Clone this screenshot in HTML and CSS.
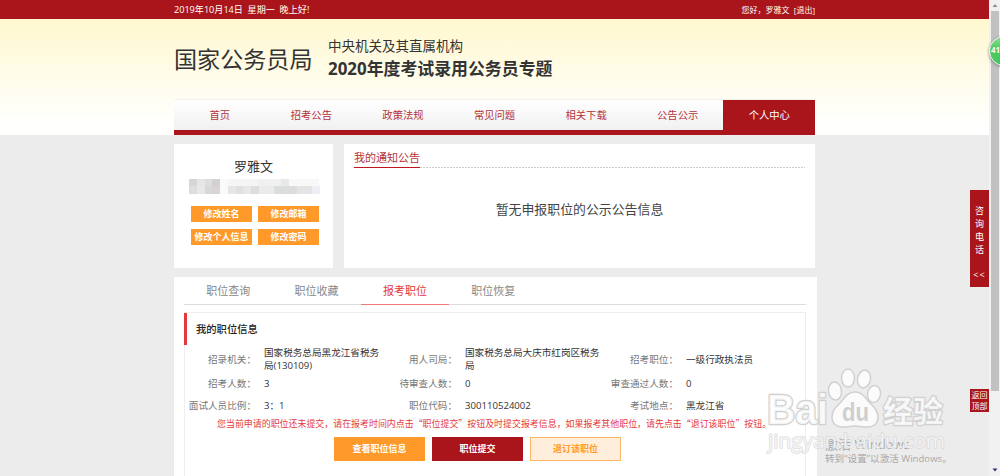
FILE: index.html
```html
<!DOCTYPE html>
<html lang="zh-CN">
<head>
  <meta charset="UTF-8">
  <title>国家公务员局</title>
  <link rel="stylesheet" href="styles.css">
</head>
<body>
  <div class="topbar">
    <div class="wrap topbar-inner">
      <span class="today">2019年10月14日&nbsp; 星期一&nbsp; 晚上好!</span>
      <span class="user">您好，罗雅文&nbsp; [退出]</span>
    </div>
  </div>

  <div class="header">
    <div class="wrap brand">
      <div class="brand-name">国家公务员局</div>
      <div class="brand-topic">
        <div class="topic-small">中央机关及其直属机构</div>
        <div class="topic-big">2020年度考试录用公务员专题</div>
      </div>
    </div>
    <div class="wrap nav">
      <a>首页</a>
      <a>招考公告</a>
      <a>政策法规</a>
      <a>常见问题</a>
      <a>相关下载</a>
      <a>公告公示</a>
      <a class="active">个人中心</a>
    </div>
  </div>

  <div class="wrap top-row">
    <div class="card profile">
      <div class="profile-name">罗雅文</div>
      <svg class="profile-id" width="132" height="15" viewBox="0 0 132 15" shape-rendering="crispEdges">
        <rect x="0" y="0" width="8" height="7" fill="#d6d6d6"/>
        <rect x="8" y="0" width="8" height="7" fill="#e6e6e6"/>
        <rect x="16" y="0" width="7" height="7" fill="#dedede"/>
        <rect x="23" y="0" width="8" height="7" fill="#d2d0d1"/>
        <rect x="0" y="7" width="8" height="8" fill="#dcdfde"/>
        <rect x="8" y="7" width="8" height="8" fill="#e8e8e8"/>
        <rect x="16" y="7" width="7" height="8" fill="#d8d8d8"/>
        <rect x="23" y="7" width="8" height="8" fill="#d9d3d5"/>
        <rect x="31" y="0" width="8" height="15" fill="#fafafa"/>
        <rect x="39" y="0" width="30" height="7" fill="#f5f5f5"/>
        <rect x="69" y="0" width="23" height="7" fill="#f0f0f0"/>
        <rect x="92" y="0" width="8" height="7" fill="#e8e8e8"/>
        <rect x="100" y="0" width="30" height="7" fill="#f8f8f8"/>
        <rect x="39" y="7" width="8" height="8" fill="#e6e6e6"/>
        <rect x="47" y="7" width="7" height="8" fill="#dfe1e0"/>
        <rect x="54" y="7" width="8" height="8" fill="#e8e8e8"/>
        <rect x="62" y="7" width="8" height="8" fill="#dcdfde"/>
        <rect x="70" y="7" width="15" height="8" fill="#ebebeb"/>
        <rect x="85" y="7" width="23" height="8" fill="#dadddc"/>
        <rect x="108" y="7" width="15" height="8" fill="#e4e4e6"/>
        <rect x="123" y="7" width="8" height="8" fill="#efeef4"/>
      </svg>
      <div class="profile-actions">
        <a>修改姓名</a>
        <a>修改邮箱</a>
        <a>修改个人信息</a>
        <a>修改密码</a>
      </div>
    </div>
    <div class="card notice">
      <div class="notice-head"><span>我的通知公告</span></div>
      <div class="notice-empty">暂无申报职位的公示公告信息</div>
    </div>
  </div>

  <div class="card jobs">
    <div class="tabs">
      <a>职位查询</a>
      <a>职位收藏</a>
      <a class="active">报考职位</a>
      <a>职位恢复</a>
    </div>
    <div class="job-box">
      <div class="job-title">我的职位信息</div>
      <div class="job-info">
        <span class="label">招录机关：</span><span class="value">国家税务总局黑龙江省税务<br>局(130109)</span>
        <span class="label">用人司局：</span><span class="value">国家税务总局大庆市红岗区税务<br>局</span>
        <span class="label">招考职位：</span><span class="value">一级行政执法员</span>

        <span class="label">招考人数：</span><span class="value">3</span>
        <span class="label">待审查人数：</span><span class="value">0</span>
        <span class="label">审查通过人数：</span><span class="value">0</span>

        <span class="label">面试人员比例：</span><span class="value">3：1</span>
        <span class="label">职位代码：</span><span class="value">300110524002</span>
        <span class="label">考试地点：</span><span class="value">黑龙江省</span>
      </div>
      <div class="job-tip">您当前申请的职位还未提交，请在报考时间内点击“职位提交”按钮及时提交报考信息，如果报考其他职位，请先点击“退订该职位”按钮。</div>
      <div class="job-buttons">
        <a class="btn btn-orange">查看职位信息</a>
        <a class="btn btn-red">职位提交</a>
        <a class="btn btn-light">退订该职位</a>
      </div>
    </div>
  </div>

  <!-- windows activation text -->
  <div class="activate">
    <div class="activate-title">激活 Windows</div>
    <div class="activate-text">转到“设置”以激活 Windows。</div>
  </div>

  <!-- watermark -->
  <svg class="watermark" width="190" height="95" viewBox="0 0 190 95">
    <g class="mark">
      <text class="mark-latin" x="1" y="58" textLength="61" lengthAdjust="spacingAndGlyphs">Bai</text>
      <ellipse cx="69" cy="25" rx="6.500" ry="9" transform="rotate(-8 69 25)"/>
      <ellipse cx="82" cy="12" rx="6.500" ry="9"/>
      <ellipse cx="98" cy="13" rx="6.500" ry="9" transform="rotate(12 98 13)"/>
      <ellipse cx="108" cy="28" rx="6.500" ry="8.500" transform="rotate(10 108 28)"/>
      <path d="M89 26c-8 0-11 7-15 11-5 5-8 8-8 14 0 7 5 10 11 10 5 0 8-1 12-1s7 1 12 1c6 0 11-3 11-10 0-6-4-10-8-14-5-5-7-11-15-11z"/>
      <text class="mark-cjk" x="117" y="56">经验</text>
      <text class="mark-url" x="2" y="82" textLength="177" lengthAdjust="spacingAndGlyphs">jingyan.baidu.com</text>
    </g>
    <text class="mark-du" x="76" y="55" textLength="27" lengthAdjust="spacingAndGlyphs">du</text>
  </svg>

  <div class="hotline"><span>咨</span><span>询</span><span>电</span><span>话</span><span class="fold">&lt;&lt;</span></div>
  <div class="back-top">返回<br>顶部</div>

  <div class="scrollbar">
    <svg width="8" height="11" viewBox="0 0 8 11"><path d="M1.5 7h5L4 4z" fill="#8b8b9b"/></svg>
    <div class="thumb"></div>
    <svg width="8" height="11" viewBox="0 0 8 11"><path d="M1.5 3.500h5L4 6.500z" fill="#303070"/></svg>
  </div>
  <div class="float-ball">41</div>
</body>
</html>
```

FILE: styles.css
```css
* {
  box-sizing: border-box;
}

body {
  margin: 0;
  height: 476px;
  position: relative;
  overflow: hidden;
  background: #ececec;
  color: #333;
  font-family: "Open Sans", "Noto Sans CJK SC", sans-serif;
  font-size: 9.6px;
  white-space: nowrap;
}

.wrap {
  width: 641px;
  margin-left: 174px;
}

.topbar {
  height: 19px;
  background: #a9151a;
  color: #fff;
  font-size: 9.1px;
  line-height: 19px;
}

.topbar-inner {
  display: flex;
  justify-content: space-between;
}

.user {
  font-size: 8px;
}

/* header */
.header {
  height: 116px;
  background: linear-gradient(#fff8d0, #fffffb 85%, #fff);
}

.brand {
  height: 80px;
  display: flex;
}

.brand-name {
  width: 154px;
  padding-top: 23px;
  font-size: 23.1px;
  line-height: 34px;
}

.topic-small {
  padding-top: 17px;
  font-size: 13.5px;
  line-height: 20px;
}

.topic-big {
  font-size: 16.9px;
  line-height: 26px;
  font-weight: bold;
}

.nav {
  display: flex;
  height: 36px;
  border-top: 1px solid #f1f1ea;
  border-bottom: 5px solid #a9151a;
  background: linear-gradient(#fff, #f1f1f1);
}

.nav a {
  flex: 1;
  text-align: center;
  font-size: 10.3px;
  line-height: 31px;
  color: #b5323a;
}

.nav .active {
  background: #a9151a;
  color: #fff;
}

.card {
  background: #fff;
}

/* profile and notice */
.top-row {
  display: flex;
  gap: 11px;
  margin-top: 9px;
}

.profile {
  width: 159px;
  height: 124px;
  padding-top: 12px;
  display: flex;
  flex-direction: column;
  align-items: center;
}

.profile-name {
  font-size: 13px;
  line-height: 20px;
}

.profile-id {
  margin: 3px 0 12px 2px;
}

.profile-actions {
  display: grid;
  grid-template-columns: 61px 61px;
  gap: 7px 6px;
  margin-left: 3px;
}

.profile-actions a {
  height: 16px;
  background: #ff9a2a;
  color: #fff;
  font-size: 9px;
  font-weight: bold;
  line-height: 15px;
  text-align: center;
}

.notice {
  flex: 1;
  padding: 3px 10px 0;
}

.notice-head {
  height: 21px;
  background: repeating-linear-gradient(90deg, #ccc 0 2px, #fff 2px 3px) 0 100% / 100% 1px no-repeat;
}

.notice-head span {
  display: inline-block;
  height: 21px;
  border-bottom: 1.5px solid #c0141e;
  color: #b5323a;
  font-size: 11px;
  line-height: 21px;
}

.notice-empty {
  margin-top: 31px;
  text-align: center;
  font-size: 12.9px;
  line-height: 20px;
  color: #444;
}

/* job panel */
.jobs {
  width: 643px;
  height: 199px;
  margin: 9px 0 0 174px;
  padding: 0 11px 0 10px;
}

.tabs {
  display: flex;
  height: 28px;
  border-bottom: 1px solid #ddd;
}

.tabs a {
  width: 88.4px;
  height: 28px;
  text-align: center;
  font-size: 11px;
  line-height: 28px;
  color: #888;
}

.tabs .active {
  color: #e4393c;
  border-bottom: 1px solid #ee7a7c;
}

.job-box {
  height: 170px;
  margin-top: 7px;
  border: 1px solid #eee;
}

.job-title {
  height: 32px;
  margin-left: -1px;
  padding-left: 9px;
  border-left: 3px solid #e4393c;
  font-size: 10.3px;
  font-weight: 500;
  line-height: 32px;
  color: #222;
}

.job-info {
  display: grid;
  grid-template-columns: 71px 129px 72px 149px 72px 120px;
  grid-template-rows: 28px 21px 23px;
  align-items: center;
  line-height: 13px;
}

.label {
  text-align: right;
  color: #777;
}

.value {
  padding-left: 8px;
}

.job-tip {
  padding-left: 32px;
  /* cjk font first, so the quotes are full width */
  font-family: "Noto Sans CJK SC", sans-serif;
  font-size: 8.95px;
  line-height: 14px;
  color: #e4393c;
}

.job-buttons {
  display: flex;
  gap: 7px;
  margin: 6px 0 0 149px;
}

.btn {
  width: 91px;
  height: 24px;
  border: 1px solid;
  font-size: 9px;
  font-weight: bold;
  line-height: 22px;
  text-align: center;
}

.btn-orange {
  background: #ff9a2a;
  border-color: #ff9a2a;
  color: #fff;
}

.btn-red {
  background: #a9151a;
  border-color: #a9151a;
  color: #fff;
}

.btn-light {
  background: #ffeedb;
  border-color: #fbb765;
  color: #ff9a2a;
}

/* everything below floats over the page */
.activate {
  position: absolute;
  left: 825px;
  top: 436px;
  color: #a8a8a8;
}

.activate-title {
  font-size: 13px;
  line-height: 16px;
}

.activate-text {
  font-size: 9.6px;
  line-height: 14px;
}

.watermark {
  position: absolute;
  left: 766px;
  top: 366px;
}

.mark {
  fill: #fff;
  fill-opacity: 0.8;
  stroke: #d0d0d0;
  stroke-width: 1.5;
}

.mark text {
  paint-order: stroke;
  stroke-width: 2.5;
  stroke-linejoin: round;
}

.mark-latin {
  font: bold 42px "Liberation Sans", sans-serif;
}

.mark-cjk {
  font: bold 30px "Noto Sans CJK SC", sans-serif;
}

.mark .mark-url {
  font: 20px "Open Sans", sans-serif;
  fill-opacity: 0.7;
  stroke-width: 1.5;
  stroke-opacity: 0.7;
}

.mark-du {
  font: bold 25px "Liberation Sans", sans-serif;
  fill: #cfcfcf;
}

.hotline {
  position: absolute;
  left: 970px;
  top: 190px;
  width: 19px;
  height: 97px;
  padding-top: 14px;
  display: flex;
  flex-direction: column;
  align-items: center;
  background: #a9151a;
  color: #fff;
  font-size: 9px;
  line-height: 13px;
}

.fold {
  margin-top: 12px;
  font-size: 9px;
  letter-spacing: 1px;
}

.back-top {
  position: absolute;
  left: 970px;
  top: 389px;
  width: 19px;
  height: 23px;
  background: #a9151a;
  color: #fff;
  font-size: 8px;
  line-height: 11px;
  text-align: center;
}

.scrollbar {
  position: absolute;
  right: 0;
  top: 0;
  width: 11px;
  height: 476px;
  display: flex;
  flex-direction: column;
  align-items: center;
  background: #f1f1f1;
}

.thumb {
  width: 8px;
  height: 380px;
  margin-bottom: 74px;
  background: #c1c1c1;
}

.float-ball {
  position: absolute;
  left: 989px;
  top: 36px;
  width: 30px;
  height: 30px;
  padding-left: 1px;
  border: 1.5px solid #eee;
  border-radius: 50%;
  background: linear-gradient(#8fe090, #4ccb62 40%, #45c65c);
  box-shadow: 0 1px 3px #777;
  color: #fff;
  font-size: 8px;
  font-weight: bold;
  line-height: 26px;
}
```
